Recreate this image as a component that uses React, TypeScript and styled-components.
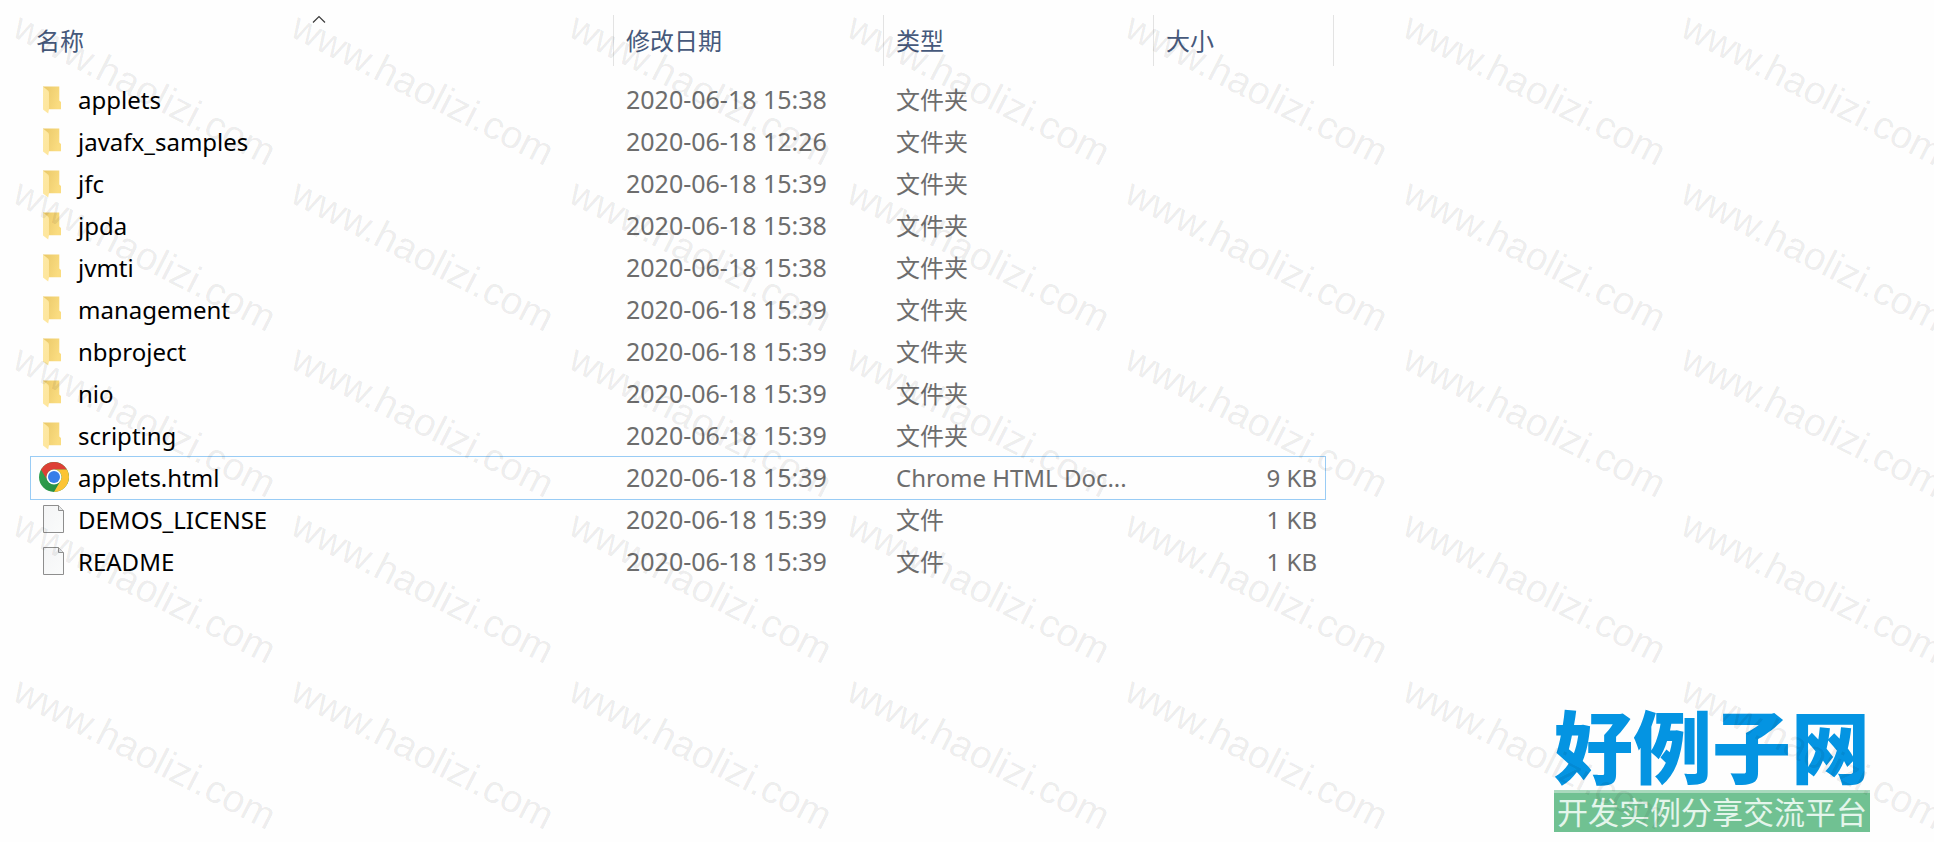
import React from "react";
import styled, { createGlobalStyle } from "styled-components";

const GlobalStyle = createGlobalStyle`
  body {
    margin: 0;
    background: #fefefe;
    font-family: "Noto Sans", "Noto Sans CJK SC", sans-serif;
  }
`;

const Page = styled.main`
  position: relative;
  display: flex;
  flex-direction: column;
  min-height: 100vh;
  box-sizing: border-box;
  padding: 15px 64px 10px 30px;
  overflow: hidden;
`;

const FileTable = styled.table`
  display: block;
  width: 100%;
  max-width: 1304px;
  font-size: 24px;
  line-height: 42px;
`;

const Head = styled.thead`
  display: block;
`;

const Body = styled.tbody`
  display: block;
  padding: 13px 9px 0 1px;
`;

const HeadRow = styled.tr`
  display: grid;
  grid-template-columns: minmax(0, 584px) 270px 270px 180px;
`;

const HeadCell = styled.th<{ $first?: boolean }>`
  position: relative;
  display: flex;
  box-sizing: border-box;
  height: 51px;
  padding: 0 0 0 ${(p) => (p.$first ? 6 : 12)}px;
  border-right: 1px solid #e3e3e3;
  font-weight: 400;
`;

const SortButton = styled.button`
  flex: 1;
  padding: 0;
  border: 0;
  background: none;
  color: #46597b;
  font: inherit;
  line-height: 48px;
  text-align: left;
`;

const SortMark = styled.svg`
  position: absolute;
  top: 0;
  left: 50%;
  width: 14px;
  height: 9px;
  margin-left: -10px;
`;

const Row = styled.tr<{ $focused?: boolean }>`
  display: grid;
  grid-template-columns: minmax(0, 583px) 270px 270px 171px;
  height: 42px;
  outline: ${(p) => (p.$focused ? "1px solid #99ccf5" : "none")};
`;

const Cell = styled.td`
  padding: 0 0 0 12px;
  color: #6d6d6d;
  white-space: nowrap;
`;

const NameCell = styled.th`
  display: flex;
  align-items: center;
  padding: 0 0 0 7px;
  color: #000;
  font-weight: 400;
  text-align: left;
`;

const DateCell = styled(Cell)`
  font-size: 25px;
  line-height: 40px;
`;

const SizeCell = styled(Cell)`
  padding: 0 8px 0 0;
  text-align: right;
`;

const IconSlot = styled.span`
  display: flex;
  flex: none;
  justify-content: center;
  width: 32px;
  margin-right: 8px;
`;

const Brand = styled.footer`
  align-self: flex-end;
  width: 316px;
  margin-top: auto;
  text-align: center;
  white-space: nowrap;
  font-family: "Noto Sans CJK SC", sans-serif;
`;

const BrandName = styled.div`
  padding-bottom: 4px;
  color: #0494e2;
  font-size: 79px;
  font-weight: 900;
  line-height: 84px;
`;

const BrandTagline = styled.div`
  padding-bottom: 4px;
  border-top: 3px solid #a9d9bd;
  background: #70c192;
  color: #e4f5eb;
  font-size: 31px;
  line-height: 35px;
`;

const Watermarks = styled.div`
  position: absolute;
  inset: 0;
  display: grid;
  grid-template-columns: repeat(7, 278px);
  grid-auto-rows: 166px;
  overflow: hidden;
  pointer-events: none;
`;

const Watermark = styled.span`
  margin: 7px 0 0 25px;
  color: rgba(0, 0, 0, 0.08);
  font-family: "Liberation Sans", sans-serif;
  font-size: 39px;
  line-height: 38px;
  transform: rotate(27deg);
  transform-origin: 0 0;
`;

type Kind = "folder" | "chrome" | "file";

interface Entry {
  name: string;
  date: string;
  kind: Kind;
  type: string;
  size?: string;
}

const folder = (name: string, time: string): Entry => ({
  name,
  date: `2020-06-18 ${time}`,
  kind: "folder",
  type: "文件夹",
});

const entries: Entry[] = [
  folder("applets", "15:38"),
  folder("javafx_samples", "12:26"),
  folder("jfc", "15:39"),
  folder("jpda", "15:38"),
  folder("jvmti", "15:38"),
  folder("management", "15:39"),
  folder("nbproject", "15:39"),
  folder("nio", "15:39"),
  folder("scripting", "15:39"),
  { name: "applets.html", date: "2020-06-18 15:39", kind: "chrome", type: "Chrome HTML Doc...", size: "9 KB" },
  { name: "DEMOS_LICENSE", date: "2020-06-18 15:39", kind: "file", type: "文件", size: "1 KB" },
  { name: "README", date: "2020-06-18 15:39", kind: "file", type: "文件", size: "1 KB" },
];

function FolderIcon() {
  return (
    <svg width="22" height="28" viewBox="1 0 22 28" aria-hidden="true">
      <defs>
        <linearGradient id="folderBack" x1="0" x2="1" y1="0" y2="0.4">
          <stop offset="0" stopColor="#e9c767" />
          <stop offset="1" stopColor="#fadc80" />
        </linearGradient>
        <linearGradient id="folderFlap" x1="0" x2="1" y1="0" y2="1">
          <stop offset="0" stopColor="#fde9a6" />
          <stop offset="1" stopColor="#fee59a" />
        </linearGradient>
      </defs>
      <path d="M1 0.5H17.3V14.6L19 16V23.3H5L1 5Z" fill="url(#folderBack)" />
      <path d="M1 0.5L6.2 4.8Q7 5.6 7 7V23L6.2 27.4L1 23.6Z" fill="url(#folderFlap)" />
    </svg>
  );
}

function FileIcon() {
  return (
    <svg width="22" height="30" viewBox="0 0 22 30" aria-hidden="true">
      <defs>
        <linearGradient id="paper" x1="0" x2="1" y1="0" y2="1">
          <stop offset="0" stopColor="#f4f5f6" />
          <stop offset="1" stopColor="#fafbfb" />
        </linearGradient>
      </defs>
      <path d="M0.5 0.5H15.5L20.5 5.5V27.5H0.5Z" fill="url(#paper)" stroke="#8e8e8e" />
      <path d="M15.5 0.5V5.5H20.5" fill="#e5e7e8" stroke="#8e8e8e" />
    </svg>
  );
}

function ChromeIcon() {
  return (
    <svg width="30" height="32" viewBox="0 0 30 32" aria-hidden="true">
      <defs>
        <linearGradient id="chromeGreen" x1="0" x2="1" y1="0" y2="0.6">
          <stop offset="0" stopColor="#35a552" />
          <stop offset="1" stopColor="#238a41" />
        </linearGradient>
      </defs>
      <circle cx="15" cy="15" r="15" fill="url(#chromeGreen)" />
      <path d="M2.01 7.5A15 15 0 0 1 27.99 7.5H15A7.5 7.5 0 0 0 8.5 18.75Z" fill="#dd4035" />
      <path d="M27.99 7.5A15 15 0 0 1 15 30L21.5 18.75A7.5 7.5 0 0 0 15 7.5Z" fill="#fcc434" />
      <circle cx="15" cy="15" r="7.5" fill="#fff" />
      <circle cx="15" cy="15" r="6" fill="#367ee9" />
    </svg>
  );
}

const icons: Record<Kind, () => React.JSX.Element> = {
  folder: FolderIcon,
  chrome: ChromeIcon,
  file: FileIcon,
};

const WATERMARK_COUNT = 35;

export default function App() {
  return (
    <>
      <GlobalStyle />
      <Page>
        <FileTable>
          <Head>
            <HeadRow>
              <HeadCell scope="col" $first aria-sort="ascending">
                <SortButton type="button">名称</SortButton>
                <SortMark viewBox="0 0 14 9" aria-hidden="true">
                  <path d="M1 7.5L7 1.5L13 7.5" fill="none" stroke="#3a3a3a" strokeWidth="1.2" />
                </SortMark>
              </HeadCell>
              {["修改日期", "类型", "大小"].map((label) => (
                <HeadCell key={label} scope="col">
                  <SortButton type="button">{label}</SortButton>
                </HeadCell>
              ))}
            </HeadRow>
          </Head>
          <Body>
            {entries.map((entry) => {
              const Icon = icons[entry.kind];
              return (
                <Row key={entry.name} $focused={entry.kind === "chrome"}>
                  <NameCell scope="row">
                    <IconSlot>
                      <Icon />
                    </IconSlot>
                    {entry.name}
                  </NameCell>
                  <DateCell>{entry.date}</DateCell>
                  <Cell>{entry.type}</Cell>
                  <SizeCell>{entry.size}</SizeCell>
                </Row>
              );
            })}
          </Body>
        </FileTable>
        <Brand>
          <BrandName>好例子网</BrandName>
          <BrandTagline>开发实例分享交流平台</BrandTagline>
        </Brand>
        <Watermarks aria-hidden="true">
          {Array.from({ length: WATERMARK_COUNT }, (_, i) => (
            <Watermark key={i}>www.haolizi.com</Watermark>
          ))}
        </Watermarks>
      </Page>
    </>
  );
}
